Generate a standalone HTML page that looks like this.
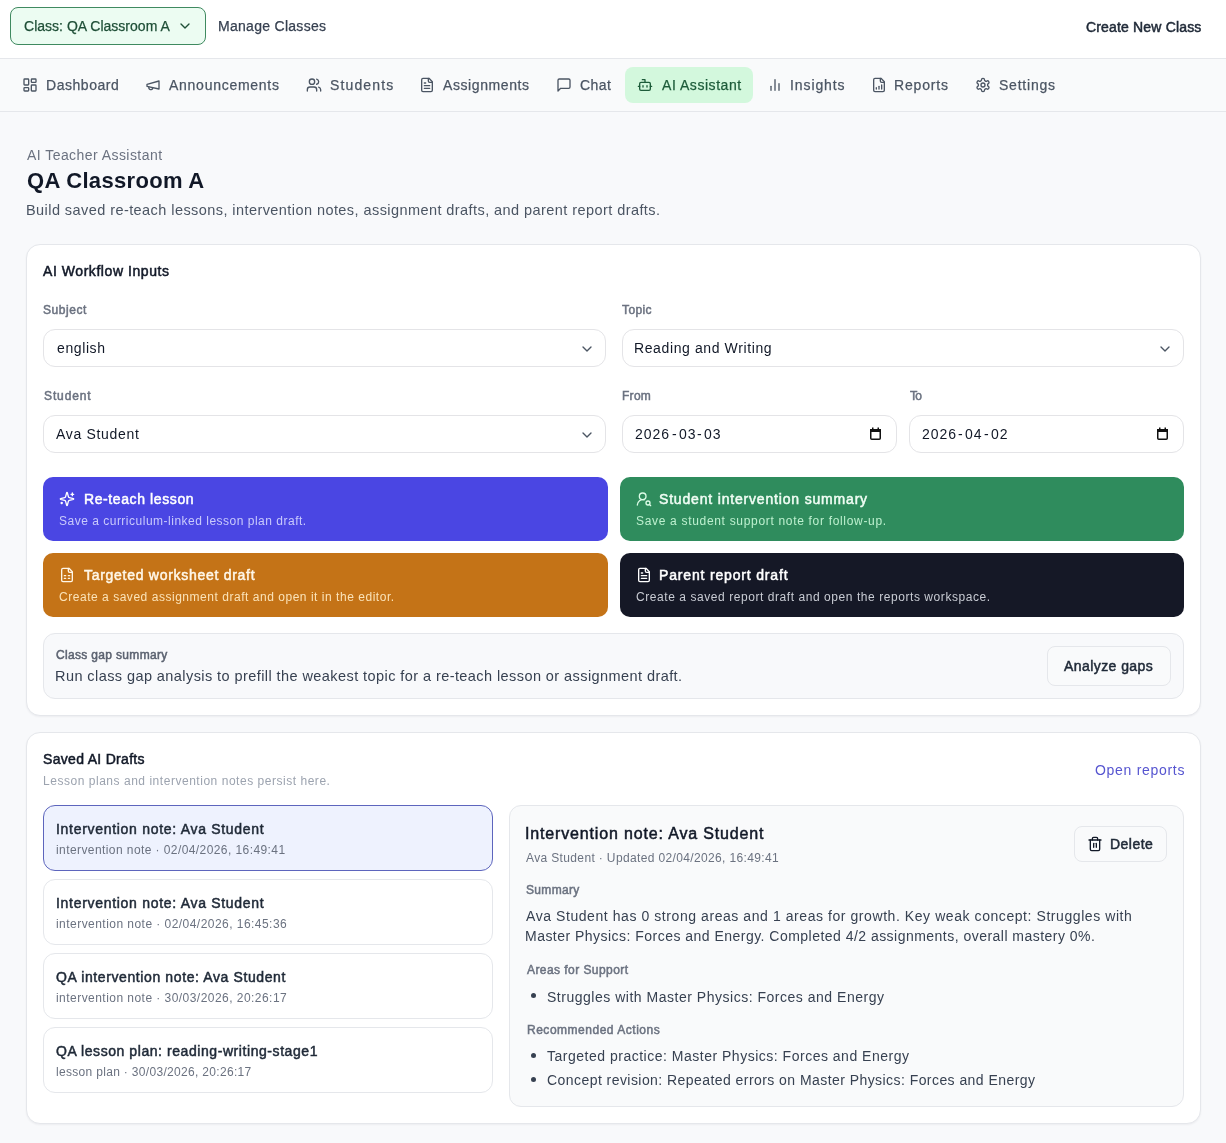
<!DOCTYPE html>
<html><head><meta charset="utf-8"><title>AI Assistant</title>
<style>
*{box-sizing:border-box;margin:0;padding:0}
html,body{width:1226px;height:1143px;overflow:hidden}
body{background:#f8f9fb;font-family:"Liberation Sans",sans-serif;position:relative}
.t{position:absolute;white-space:nowrap;line-height:1;will-change:transform}
.m{-webkit-text-stroke:0.25px currentColor}
.b{font-weight:700}
.sb{-webkit-text-stroke:0.5px currentColor}
.ic{position:absolute}
.bx{position:absolute}
.cal{position:absolute;width:11px;height:12px;border:1.6px solid #111827;border-top-width:3px;border-radius:1.5px}
</style></head><body>
<div class="bx" style="left:0;top:0;width:1226px;height:59px;background:#fff;border-bottom:1px solid #e5e7eb"></div>
<div class="bx" style="left:10px;top:7px;width:196px;height:38px;background:#ecfcf2;border:1px solid #3f8a60;border-radius:8px"></div>
<div class="bx" style="left:0;top:59px;width:1226px;height:53px;background:#f9fafb;border-bottom:1px solid #e5e7eb"></div>
<div class="bx" style="left:625px;top:67px;width:128px;height:36px;background:#d3f8dd;border-radius:8px"></div>

<div class="bx" style="left:26px;top:244px;width:1175px;height:472px;background:#fff;border:1px solid #e5e7eb;border-radius:14px;box-shadow:0 1px 2px rgba(16,24,40,0.05)"></div>
<div class="bx" style="left:43px;top:329px;width:563px;height:38px;background:#fff;border:1px solid #e4e4e7;border-radius:12px"></div>
<div class="bx" style="left:622px;top:329px;width:562px;height:38px;background:#fff;border:1px solid #e4e4e7;border-radius:12px"></div>
<div class="bx" style="left:43px;top:415px;width:563px;height:38px;background:#fff;border:1px solid #e4e4e7;border-radius:12px"></div>
<div class="bx" style="left:622px;top:415px;width:275px;height:38px;background:#fff;border:1px solid #e4e4e7;border-radius:12px"></div>
<div class="bx" style="left:909px;top:415px;width:275px;height:38px;background:#fff;border:1px solid #e4e4e7;border-radius:12px"></div>

<div class="bx" style="left:43px;top:477px;width:565px;height:64px;background:#4a46e3;border-radius:10px"></div>
<div class="bx" style="left:620px;top:477px;width:564px;height:64px;background:#2f8c5d;border-radius:10px"></div>
<div class="bx" style="left:43px;top:553px;width:565px;height:64px;background:#c47317;border-radius:10px"></div>
<div class="bx" style="left:620px;top:553px;width:564px;height:64px;background:#151826;border-radius:10px"></div>

<div class="bx" style="left:43px;top:633px;width:1141px;height:66px;background:#f8f9fb;border:1px solid #e5e7eb;border-radius:12px"></div>
<div class="bx" style="left:1047px;top:646px;width:124px;height:40px;background:#f9fafb;border:1px solid #e5e7eb;border-radius:8px"></div>

<div class="bx" style="left:26px;top:732px;width:1175px;height:392px;background:#fff;border:1px solid #e5e7eb;border-radius:14px;box-shadow:0 1px 2px rgba(16,24,40,0.05)"></div>
<div class="bx" style="left:43px;top:805px;width:450px;height:66px;background:#eef2fe;border:1px solid #5d65bd;border-radius:12px"></div>
<div class="bx" style="left:43px;top:879px;width:450px;height:66px;background:#fff;border:1px solid #e5e7eb;border-radius:12px"></div>
<div class="bx" style="left:43px;top:953px;width:450px;height:66px;background:#fff;border:1px solid #e5e7eb;border-radius:12px"></div>
<div class="bx" style="left:43px;top:1027px;width:450px;height:66px;background:#fff;border:1px solid #e5e7eb;border-radius:12px"></div>
<div class="bx" style="left:509px;top:805px;width:675px;height:302px;background:#f9fafb;border:1px solid #e5e7eb;border-radius:12px"></div>
<div class="bx" style="left:1074px;top:826px;width:93px;height:36px;background:#f9fafb;border:1px solid #e5e7eb;border-radius:8px"></div>
<div class="bx" style="left:531px;top:993px;width:5px;height:5px;background:#374151;border-radius:50%"></div>
<div class="bx" style="left:531px;top:1053px;width:5px;height:5px;background:#374151;border-radius:50%"></div>
<div class="bx" style="left:531px;top:1077px;width:5px;height:5px;background:#374151;border-radius:50%"></div>
<svg class="ic" style="left:869.5px;top:427px" width="11" height="13" viewBox="0 0 11 13"><rect x="0.75" y="2.75" width="9.5" height="9.5" rx="1" fill="none" stroke="#111" stroke-width="1.5"/><rect x="0" y="2" width="11" height="3" fill="#111"/><rect x="2" y="0.5" width="1.5" height="2" fill="#111"/><rect x="7.5" y="0.5" width="1.5" height="2" fill="#111"/></svg>
<svg class="ic" style="left:1156.5px;top:427px" width="11" height="13" viewBox="0 0 11 13"><rect x="0.75" y="2.75" width="9.5" height="9.5" rx="1" fill="none" stroke="#111" stroke-width="1.5"/><rect x="0" y="2" width="11" height="3" fill="#111"/><rect x="2" y="0.5" width="1.5" height="2" fill="#111"/><rect x="7.5" y="0.5" width="1.5" height="2" fill="#111"/></svg>
<svg class="ic" style="left:22px;top:77px;color:#4b5563" width="16" height="16" viewBox="0 0 24 24" fill="none" stroke="currentColor" stroke-width="2" stroke-linecap="round" stroke-linejoin="round"><rect width="7" height="9" x="3" y="3" rx="1"/><rect width="7" height="5" x="14" y="3" rx="1"/><rect width="7" height="9" x="14" y="12" rx="1"/><rect width="7" height="5" x="3" y="16" rx="1"/></svg>
<svg class="ic" style="left:145px;top:77px;color:#4b5563" width="16" height="16" viewBox="0 0 24 24" fill="none" stroke="currentColor" stroke-width="2" stroke-linecap="round" stroke-linejoin="round"><path d="m3 11 18-5v12L3 14v-3z"/><path d="M11.6 16.8a3 3 0 1 1-5.8-1.6"/></svg>
<svg class="ic" style="left:306px;top:77px;color:#4b5563" width="16" height="16" viewBox="0 0 24 24" fill="none" stroke="currentColor" stroke-width="2" stroke-linecap="round" stroke-linejoin="round"><path d="M16 21v-2a4 4 0 0 0-4-4H6a4 4 0 0 0-4 4v2"/><circle cx="9" cy="7" r="4"/><path d="M22 21v-2a4 4 0 0 0-3-3.87"/><path d="M16 3.13a4 4 0 0 1 0 7.75"/></svg>
<svg class="ic" style="left:419px;top:77px;color:#4b5563" width="16" height="16" viewBox="0 0 24 24" fill="none" stroke="currentColor" stroke-width="2" stroke-linecap="round" stroke-linejoin="round"><path d="M15 2H6a2 2 0 0 0-2 2v16a2 2 0 0 0 2 2h12a2 2 0 0 0 2-2V7Z"/><path d="M14 2v4a2 2 0 0 0 2 2h4"/><path d="M10 9H8"/><path d="M16 13H8"/><path d="M16 17H8"/></svg>
<svg class="ic" style="left:556px;top:77px;color:#4b5563" width="16" height="16" viewBox="0 0 24 24" fill="none" stroke="currentColor" stroke-width="2" stroke-linecap="round" stroke-linejoin="round"><path d="M21 15a2 2 0 0 1-2 2H7l-4 4V5a2 2 0 0 1 2-2h14a2 2 0 0 1 2 2z"/></svg>
<svg class="ic" style="left:637px;top:77px;color:#1d5c3a" width="16" height="16" viewBox="0 0 24 24" fill="none" stroke="currentColor" stroke-width="2" stroke-linecap="round" stroke-linejoin="round"><path d="M12 8V4H8"/><rect width="16" height="12" x="4" y="8" rx="2"/><path d="M2 14h2"/><path d="M20 14h2"/><path d="M15 13v2"/><path d="M9 13v2"/></svg>
<svg class="ic" style="left:767px;top:77px;color:#4b5563" width="16" height="16" viewBox="0 0 24 24" fill="none" stroke="currentColor" stroke-width="2" stroke-linecap="round" stroke-linejoin="round"><line x1="18" x2="18" y1="20" y2="10"/><line x1="12" x2="12" y1="20" y2="4"/><line x1="6" x2="6" y1="20" y2="14"/></svg>
<svg class="ic" style="left:871px;top:77px;color:#4b5563" width="16" height="16" viewBox="0 0 24 24" fill="none" stroke="currentColor" stroke-width="2" stroke-linecap="round" stroke-linejoin="round"><path d="M15 2H6a2 2 0 0 0-2 2v16a2 2 0 0 0 2 2h12a2 2 0 0 0 2-2V7Z"/><path d="M14 2v4a2 2 0 0 0 2 2h4"/><path d="M8 18v-2"/><path d="M12 18v-4"/><path d="M16 18v-6"/></svg>
<svg class="ic" style="left:975px;top:77px;color:#4b5563" width="16" height="16" viewBox="0 0 24 24" fill="none" stroke="currentColor" stroke-width="2" stroke-linecap="round" stroke-linejoin="round"><path d="M12.22 2h-.44a2 2 0 0 0-2 2v.18a2 2 0 0 1-1 1.73l-.43.25a2 2 0 0 1-2 0l-.15-.08a2 2 0 0 0-2.73.73l-.22.38a2 2 0 0 0 .73 2.73l.15.1a2 2 0 0 1 1 1.72v.51a2 2 0 0 1-1 1.74l-.15.09a2 2 0 0 0-.73 2.73l.22.38a2 2 0 0 0 2.73.73l.15-.08a2 2 0 0 1 2 0l.43.25a2 2 0 0 1 1 1.73V20a2 2 0 0 0 2 2h.44a2 2 0 0 0 2-2v-.18a2 2 0 0 1 1-1.73l.43-.25a2 2 0 0 1 2 0l.15.08a2 2 0 0 0 2.73-.73l.22-.39a2 2 0 0 0-.73-2.73l-.15-.08a2 2 0 0 1-1-1.74v-.5a2 2 0 0 1 1-1.74l.15-.09a2 2 0 0 0 .73-2.73l-.22-.38a2 2 0 0 0-2.73-.73l-.15.08a2 2 0 0 1-2 0l-.43-.25a2 2 0 0 1-1-1.73V4a2 2 0 0 0-2-2z"/><circle cx="12" cy="12" r="3"/></svg>
<svg class="ic" style="left:177px;top:18px;color:#1f4f37" width="16" height="16" viewBox="0 0 24 24" fill="none" stroke="currentColor" stroke-width="2" stroke-linecap="round" stroke-linejoin="round"><path d="m6 9 6 6 6-6"/></svg>
<svg class="ic" style="left:578.5px;top:341px;color:#4b5563" width="16" height="16" viewBox="0 0 24 24" fill="none" stroke="currentColor" stroke-width="2" stroke-linecap="round" stroke-linejoin="round"><path d="m6 9 6 6 6-6"/></svg>
<svg class="ic" style="left:1156.5px;top:341px;color:#4b5563" width="16" height="16" viewBox="0 0 24 24" fill="none" stroke="currentColor" stroke-width="2" stroke-linecap="round" stroke-linejoin="round"><path d="m6 9 6 6 6-6"/></svg>
<svg class="ic" style="left:578.5px;top:427px;color:#4b5563" width="16" height="16" viewBox="0 0 24 24" fill="none" stroke="currentColor" stroke-width="2" stroke-linecap="round" stroke-linejoin="round"><path d="m6 9 6 6 6-6"/></svg>
<svg class="ic" style="left:59px;top:491px;color:#ffffff" width="16" height="16" viewBox="0 0 24 24" fill="none" stroke="currentColor" stroke-width="2" stroke-linecap="round" stroke-linejoin="round"><path d="M9.937 15.5A2 2 0 0 0 8.5 14.063l-6.135-1.582a.5.5 0 0 1 0-.962L8.5 9.936A2 2 0 0 0 9.937 8.5l1.582-6.135a.5.5 0 0 1 .963 0L14.063 8.5A2 2 0 0 0 15.5 9.937l6.135 1.581a.5.5 0 0 1 0 .964L15.5 14.063a2 2 0 0 0-1.437 1.437l-1.582 6.135a.5.5 0 0 1-.963 0z"/><path d="M20 3v4"/><path d="M22 5h-4"/><path d="M4 17v2"/><path d="M5 18H3"/></svg>
<svg class="ic" style="left:636px;top:491px;color:#dcfce7" width="16" height="16" viewBox="0 0 24 24" fill="none" stroke="currentColor" stroke-width="2" stroke-linecap="round" stroke-linejoin="round"><circle cx="10" cy="8" r="5"/><path d="M2 21a8 8 0 0 1 10.434-7.62"/><circle cx="18" cy="18" r="3"/><path d="m22 22-1.9-1.9"/></svg>
<svg class="ic" style="left:59px;top:567px;color:#fff7e8" width="16" height="16" viewBox="0 0 24 24" fill="none" stroke="currentColor" stroke-width="2" stroke-linecap="round" stroke-linejoin="round"><path d="M15 2H6a2 2 0 0 0-2 2v16a2 2 0 0 0 2 2h12a2 2 0 0 0 2-2V7Z"/><path d="M14 2v4a2 2 0 0 0 2 2h4"/><path d="M8 13h2"/><path d="M14 13h2"/><path d="M8 17h2"/><path d="M14 17h2"/></svg>
<svg class="ic" style="left:636px;top:567px;color:#ffffff" width="16" height="16" viewBox="0 0 24 24" fill="none" stroke="currentColor" stroke-width="2" stroke-linecap="round" stroke-linejoin="round"><path d="M15 2H6a2 2 0 0 0-2 2v16a2 2 0 0 0 2 2h12a2 2 0 0 0 2-2V7Z"/><path d="M14 2v4a2 2 0 0 0 2 2h4"/><path d="M10 9H8"/><path d="M16 13H8"/><path d="M16 17H8"/></svg>
<svg class="ic" style="left:1087px;top:836px;color:#111827" width="16" height="16" viewBox="0 0 24 24" fill="none" stroke="currentColor" stroke-width="2" stroke-linecap="round" stroke-linejoin="round"><path d="M3 6h18"/><path d="M19 6v14c0 1-1 2-2 2H7c-1 0-2-1-2-2V6"/><path d="M8 6V4c0-1 1-2 2-2h4c1 0 2 1 2 2v2"/><line x1="10" x2="10" y1="11" y2="17"/><line x1="14" x2="14" y1="11" y2="17"/></svg>
<div id="h1" class="t m" style="left:23.50px;top:19.45px;font-size:14px;color:#1f4f37;letter-spacing:0.015px">Class: QA Classroom A</div>
<div id="h2" class="t m" style="left:217.60px;top:19.45px;font-size:14px;color:#374151;letter-spacing:0.287px">Manage Classes</div>
<div id="h3" class="t sb" style="left:1085.60px;top:19.65px;font-size:14px;color:#1f2937;letter-spacing:0.166px">Create New Class</div>
<div id="n1" class="t m" style="left:45.80px;top:78.15px;font-size:14px;color:#4b5563;letter-spacing:0.537px">Dashboard</div>
<div id="n2" class="t m" style="left:169.00px;top:78.15px;font-size:14px;color:#4b5563;letter-spacing:0.735px">Announcements</div>
<div id="n3" class="t m" style="left:329.90px;top:78.15px;font-size:14px;color:#4b5563;letter-spacing:1.134px">Students</div>
<div id="n4" class="t m" style="left:442.70px;top:78.15px;font-size:14px;color:#4b5563;letter-spacing:0.586px">Assignments</div>
<div id="n5" class="t m" style="left:579.80px;top:78.15px;font-size:14px;color:#4b5563;letter-spacing:0.439px">Chat</div>
<div id="n6" class="t m" style="left:661.50px;top:78.15px;font-size:14px;color:#1d5c3a;letter-spacing:0.543px">AI Assistant</div>
<div id="n7" class="t m" style="left:789.90px;top:78.15px;font-size:14px;color:#4b5563;letter-spacing:0.907px">Insights</div>
<div id="n8" class="t m" style="left:894.20px;top:78.15px;font-size:14px;color:#4b5563;letter-spacing:0.830px">Reports</div>
<div id="n9" class="t m" style="left:998.70px;top:78.15px;font-size:14px;color:#4b5563;letter-spacing:0.773px">Settings</div>
<div id="p1" class="t" style="left:26.50px;top:147.75px;font-size:14px;color:#6b7280;letter-spacing:0.446px">AI Teacher Assistant</div>
<div id="p2" class="t b" style="left:26.50px;top:169.68px;font-size:22px;color:#111827;letter-spacing:0.313px">QA Classroom A</div>
<div id="p3" class="t" style="left:25.50px;top:202.93px;font-size:14.5px;color:#4b5563;letter-spacing:0.430px">Build saved re-teach lessons, intervention notes, assignment drafts, and parent report drafts.</div>
<div id="c1" class="t sb" style="left:43.30px;top:264.45px;font-size:14px;color:#111827;letter-spacing:0.557px">AI Workflow Inputs</div>
<div id="l1" class="t sb" style="left:43.30px;top:303.84px;font-size:12px;color:#6b7280;letter-spacing:0.542px">Subject</div>
<div id="l2" class="t sb" style="left:622.00px;top:303.84px;font-size:12px;color:#6b7280;letter-spacing:0.392px">Topic</div>
<div id="l3" class="t sb" style="left:43.50px;top:389.84px;font-size:12px;color:#6b7280;letter-spacing:0.889px">Student</div>
<div id="l4" class="t sb" style="left:622.00px;top:390.04px;font-size:12px;color:#6b7280;letter-spacing:0.290px">From</div>
<div id="l5" class="t sb" style="left:909.50px;top:389.84px;font-size:12px;color:#6b7280;letter-spacing:-0.639px">To</div>
<div id="i1" class="t" style="left:56.80px;top:341.15px;font-size:14px;color:#111827;letter-spacing:0.603px">english</div>
<div id="i2" class="t" style="left:633.80px;top:341.15px;font-size:14px;color:#111827;letter-spacing:0.611px">Reading and Writing</div>
<div id="i3" class="t" style="left:56.10px;top:427.15px;font-size:14px;color:#111827;letter-spacing:0.687px">Ava Student</div>
<div id="a1" class="t sb" style="left:83.50px;top:492.15px;font-size:14px;color:#ffffff;letter-spacing:0.599px">Re-teach lesson</div>
<div id="a2" class="t" style="left:59.20px;top:514.54px;font-size:12px;color:#c9cafc;letter-spacing:0.501px">Save a curriculum-linked lesson plan draft.</div>
<div id="a3" class="t sb" style="left:659.20px;top:492.15px;font-size:14px;color:#f0fdf4;letter-spacing:0.820px">Student intervention summary</div>
<div id="a4" class="t" style="left:635.60px;top:514.54px;font-size:12px;color:#bdf0cf;letter-spacing:0.683px">Save a student support note for follow-up.</div>
<div id="a5" class="t sb" style="left:83.50px;top:568.15px;font-size:14px;color:#fff7e8;letter-spacing:0.715px">Targeted worksheet draft</div>
<div id="a6" class="t" style="left:59.20px;top:590.54px;font-size:12px;color:#fbe3b8;letter-spacing:0.531px">Create a saved assignment draft and open it in the editor.</div>
<div id="a7" class="t sb" style="left:659.20px;top:568.15px;font-size:14px;color:#ffffff;letter-spacing:0.831px">Parent report draft</div>
<div id="a8" class="t" style="left:635.60px;top:590.54px;font-size:12px;color:#c8cbd3;letter-spacing:0.562px">Create a saved report draft and open the reports workspace.</div>
<div id="g1" class="t sb" style="left:56.40px;top:648.54px;font-size:12px;color:#5b6270;letter-spacing:0.331px">Class gap summary</div>
<div id="g2" class="t" style="left:55.40px;top:668.93px;font-size:14.5px;color:#374151;letter-spacing:0.425px">Run class gap analysis to prefill the weakest topic for a re-teach lesson or assignment draft.</div>
<div id="g3" class="t sb" style="left:1064.20px;top:659.05px;font-size:14px;color:#1f2937;letter-spacing:0.431px">Analyze gaps</div>
<div id="s1" class="t sb" style="left:43.40px;top:752.05px;font-size:14px;color:#111827;letter-spacing:0.307px">Saved AI Drafts</div>
<div id="s2" class="t" style="left:43.40px;top:775.14px;font-size:12px;color:#9ca3af;letter-spacing:0.530px">Lesson plans and intervention notes persist here.</div>
<div id="s3" class="t" style="left:1095.10px;top:762.55px;font-size:14px;color:#5655d0;letter-spacing:0.699px">Open reports</div>
<div id="lt0" class="t sb" style="left:56.40px;top:821.65px;font-size:14px;color:#1f2937;letter-spacing:0.703px">Intervention note: Ava Student</div>
<div id="lm0" class="t" style="left:56.40px;top:843.84px;font-size:12px;color:#6b7280;letter-spacing:0.417px">intervention note · 02/04/2026, 16:49:41</div>
<div id="lt1" class="t sb" style="left:56.40px;top:895.65px;font-size:14px;color:#1f2937;letter-spacing:0.703px">Intervention note: Ava Student</div>
<div id="lm1" class="t" style="left:56.40px;top:917.84px;font-size:12px;color:#6b7280;letter-spacing:0.458px">intervention note · 02/04/2026, 16:45:36</div>
<div id="lt2" class="t sb" style="left:56.40px;top:969.65px;font-size:14px;color:#1f2937;letter-spacing:0.610px">QA intervention note: Ava Student</div>
<div id="lm2" class="t" style="left:56.40px;top:991.84px;font-size:12px;color:#6b7280;letter-spacing:0.458px">intervention note · 30/03/2026, 20:26:17</div>
<div id="lt3" class="t sb" style="left:56.40px;top:1043.65px;font-size:14px;color:#1f2937;letter-spacing:0.567px">QA lesson plan: reading-writing-stage1</div>
<div id="lm3" class="t" style="left:56.40px;top:1065.84px;font-size:12px;color:#6b7280;letter-spacing:0.317px">lesson plan · 30/03/2026, 20:26:17</div>
<div id="d1" class="t sb" style="left:525.40px;top:825.96px;font-size:16px;color:#111827;letter-spacing:0.842px">Intervention note: Ava Student</div>
<div id="d2" class="t" style="left:526.40px;top:852.14px;font-size:12px;color:#6b7280;letter-spacing:0.359px">Ava Student · Updated 02/04/2026, 16:49:41</div>
<div id="d3" class="t sb" style="left:1110.00px;top:837.15px;font-size:14px;color:#1f2937;letter-spacing:0.463px">Delete</div>
<div id="d4" class="t sb" style="left:526.40px;top:883.94px;font-size:12px;color:#6b7280;letter-spacing:0.330px">Summary</div>
<div id="d5" class="t" style="left:526.40px;top:909.15px;font-size:14px;color:#374151;letter-spacing:0.568px">Ava Student has 0 strong areas and 1 areas for growth. Key weak concept: Struggles with</div>
<div id="d6" class="t" style="left:525.40px;top:929.45px;font-size:14px;color:#374151;letter-spacing:0.474px">Master Physics: Forces and Energy. Completed 4/2 assignments, overall mastery 0%.</div>
<div id="d7" class="t sb" style="left:526.50px;top:964.34px;font-size:12px;color:#6b7280;letter-spacing:0.437px">Areas for Support</div>
<div id="d8" class="t" style="left:546.60px;top:989.55px;font-size:14px;color:#374151;letter-spacing:0.515px">Struggles with Master Physics: Forces and Energy</div>
<div id="d9" class="t sb" style="left:526.50px;top:1024.24px;font-size:12px;color:#6b7280;letter-spacing:0.517px">Recommended Actions</div>
<div id="d10" class="t" style="left:546.60px;top:1049.45px;font-size:14px;color:#374151;letter-spacing:0.507px">Targeted practice: Master Physics: Forces and Energy</div>
<div id="d11" class="t" style="left:546.60px;top:1073.45px;font-size:14px;color:#374151;letter-spacing:0.441px">Concept revision: Repeated errors on Master Physics: Forces and Energy</div>
<div class="t" style="left:635.40px;top:427.15px;font-size:14px;color:#111827;letter-spacing:1.0px">2026</div><div class="t" style="left:671.60px;top:427.15px;font-size:14px;color:#111827;letter-spacing:0px">-</div><div class="t" style="left:678.50px;top:427.15px;font-size:14px;color:#111827;letter-spacing:1.0px">03</div><div class="t" style="left:697.10px;top:427.15px;font-size:14px;color:#111827;letter-spacing:0px">-</div><div class="t" style="left:703.90px;top:427.15px;font-size:14px;color:#111827;letter-spacing:1.0px">03</div>
<div class="t" style="left:922.20px;top:427.15px;font-size:14px;color:#111827;letter-spacing:1.0px">2026</div><div class="t" style="left:958.40px;top:427.15px;font-size:14px;color:#111827;letter-spacing:0px">-</div><div class="t" style="left:965.30px;top:427.15px;font-size:14px;color:#111827;letter-spacing:1.0px">04</div><div class="t" style="left:983.90px;top:427.15px;font-size:14px;color:#111827;letter-spacing:0px">-</div><div class="t" style="left:990.70px;top:427.15px;font-size:14px;color:#111827;letter-spacing:1.0px">02</div>
</body></html>
